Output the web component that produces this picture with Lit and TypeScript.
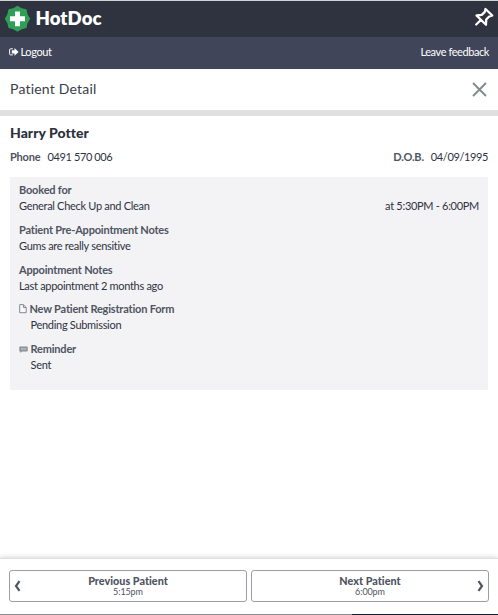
import { LitElement, html, css } from "lit";
import { customElement } from "lit/decorators.js";

@customElement("app-root")
export class AppRoot extends LitElement {
  static styles = css`
    :host {
      display: flex;
      flex-direction: column;
      box-sizing: border-box;
      width: 498px;
      height: 615px;
      overflow: hidden;
      background: #fff;
      color: #2e323f;
      font: 11px/16px Lato, sans-serif;
      letter-spacing: -0.3px;
      font-variant-ligatures: none;
    }
    * { box-sizing: border-box; }
    svg { display: block; flex: none; }
    .brand {
      display: flex;
      justify-content: space-between;
      height: 37px;
      flex: none;
      border-top: 1px solid #ced3d5;
      background: #2f333f;
      padding: 4px 4px 0 4px;
    }
    .logo { display: flex; gap: 4.5px; color: #fff; font: 800 18.6px/27px Lato, sans-serif; letter-spacing: 0.05px; }
    .pin { margin-top: 2px; }
    .bar {
      display: flex;
      justify-content: space-between;
      align-items: center;
      height: 32px;
      flex: none;
      padding: 0 9px 2px 9px;
      background: #414559;
      color: #fff;
    }
    .feedback { letter-spacing: -0.42px; }
    .logout { display: flex; align-items: center; gap: 1.5px; letter-spacing: -0.4px; }
    .title {
      display: flex;
      justify-content: space-between;
      align-items: center;
      height: 47px;
      flex: none;
      padding: 0 11px 0 10px;
      border-bottom: 6px solid #e0e0e0;
      font-size: 14px;
      letter-spacing: 0.2px;
      color: #3a3e49;
    }
    .title span { margin-top: -1px; }
    .main { flex: 1; padding: 8px 10px 0; }
    .name { font: 900 14px/18px Lato, sans-serif; letter-spacing: 0.02px; color: #2c303c; }
    .facts { display: flex; justify-content: space-between; margin-top: 7px; letter-spacing: -0.38px; }
    .facts b { margin-right: 7px; }
    b { font-weight: 700; letter-spacing: -0.19px; color: #4f5462; }
    .card {
      height: 213px;
      margin-top: 12px;
      padding: 5px 9px;
      background: #f3f3f5;
      display: flex;
      flex-direction: column;
      gap: 7.8px;
    }
    .label, .value { display: flex; align-items: center; height: 16px; }
    .value { justify-content: space-between; }
    .indent { padding-left: 11.5px; }
    .label svg { margin-right: 2.5px; }
    .footer {
      display: flex;
      gap: 4px;
      height: 56px;
      flex: none;
      padding: 11px 9px 11px;
      border-top: 1px solid #dedede;
      box-shadow: 0 -1px 5px rgba(0, 0, 0, 0.16);
    }
    .nav {
      flex: 1;
      display: flex;
      align-items: center;
      justify-content: space-between;
      height: 32px;
      padding: 0 4px;
      border: 1px solid #9c9ea6;
      border-radius: 3px;
      background: #fff;
      color: #4f5462;
      text-align: center;
    }
    .caption { display: flex; flex-direction: column; align-items: center; }
    .who { font: 900 10.8px/14px Lato, sans-serif; letter-spacing: 0.02px; margin-top: -2px; }
    .when { font: 9px/11px Lato, sans-serif; letter-spacing: -0.1px; margin-top: -2px; }
    .spacer { width: 7px; }
    .edge { height: 1px; flex: none; background: linear-gradient(90deg, #8b8d90 352px, #171b35 352px); }
  `;

  private section(label: string, value: string, aside = "", icon: unknown = "") {
    return html`<div>
      <div class="label">${icon}<b>${label}</b></div>
      <div class="value ${icon ? "indent" : ""}"><span>${value}</span><span>${aside}</span></div>
    </div>`;
  }

  render() {
    const page = html`<svg width="8" height="10" viewBox="0 0 8 10" fill="#f8f8f9" stroke="#858994" stroke-width="1"><path d="M.7.6h3.7L7.2 3.5v5.200H.7zM4.400.6v2.900h2.800"/></svg>`;
    const chat = html`<svg width="9" height="8" viewBox="0 0 9 8"><path fill="#858994" d="M1 1.500h7q.7 0 .7.7v3.600q0 .7-.7.7H3L1.400 7.900V6.500H1q-.7 0-.7-.7V2.200Q.3 1.500 1 1.500"/><path stroke="#c9cbd0" stroke-width=".8" d="M1.600 3.300h5.800M1.600 4.800h5.800"/></svg>`;
    return html`
      <div class="brand">
        <div class="logo">
          <svg width="27" height="28" viewBox="0 0 27 28">
            <path fill="#2f9f58" d="M13.500.7 17.600 3.200 22.500 4.300 23.500 9.200 26.200 13.700 23.500 18.200 22.500 23 17.600 24.200 13.500 26.800 9.300 24.200 4.500 23 3.400 18.200.800 13.700 3.400 9.200 4.500 4.300 9.300 3.200z"/>
            <path fill="#fff" d="M11 6.500h5v4.800h5v5h-5v4.900h-5v-4.900H6v-5h5z"/>
          </svg>
          <span>HotDoc</span>
        </div>
        <svg class="pin" width="20" height="20" viewBox="0 0 20 20" fill="none" stroke="#fff" stroke-width="2.300" stroke-linejoin="round" stroke-linecap="round">
          <path d="M11.500 2 18.300 8.500 15.200 9.500 12.200 12.500 12 17.800 2.500 8.500 7.800 7.900 10.800 4.900zM6.800 13 2.200 17.500"/>
        </svg>
      </div>
      <div class="bar">
        <span class="logout">
          <svg width="10" height="8" viewBox="0 0 10 8"><path fill="none" stroke="#fff" d="M3.800.8H1.700Q.6.8.6 1.800v4.100q0 1 1.100 1h2.100"/><path fill="#fff" d="M2.800 2.300h2.700V.1L9.600 3.900 5.500 7.700V5.400H2.800z"/></svg>
          <span>Logout</span>
        </span>
        <span class="feedback">Leave feedback</span>
      </div>
      <div class="title">
        <span>Patient Detail</span>
        <svg width="15" height="15" viewBox="0 0 15 15"><path stroke="#85898d" stroke-width="1.900" d="M1 1l13 13M14 1 1 14"/></svg>
      </div>
      <div class="main">
        <div class="name">Harry Potter</div>
        <div class="facts">
          <span><b>Phone</b>0491 570 006</span>
          <span><b>D.O.B.</b>04/09/1995</span>
        </div>
        <div class="card">
          ${this.section("Booked for", "General Check Up and Clean", "at 5:30PM - 6:00PM")}
          ${this.section("Patient Pre-Appointment Notes", "Gums are really sensitive")}
          ${this.section("Appointment Notes", "Last appointment 2 months ago")}
          ${this.section("New Patient Registration Form", "Pending Submission", "", page)}
          ${this.section("Reminder", "Sent", "", chat)}
        </div>
      </div>
      <div class="footer">
        <div class="nav">
          <svg width="7" height="12" viewBox="0 0 7 12"><path fill="none" stroke="#4f5462" stroke-width="2.200" d="M5.500 1.200 2 6l3.500 4.800"/></svg>
          <div class="caption"><span class="who">Previous Patient</span><span class="when">5:15pm</span></div>
          <span class="spacer"></span>
        </div>
        <div class="nav">
          <span class="spacer"></span>
          <div class="caption"><span class="who">Next Patient</span><span class="when">6:00pm</span></div>
          <svg width="7" height="12" viewBox="0 0 7 12"><path fill="none" stroke="#4f5462" stroke-width="2.200" d="M1.500 1.200 5 6l-3.500 4.800"/></svg>
        </div>
      </div>
      <div class="edge"></div>
    `;
  }
}
